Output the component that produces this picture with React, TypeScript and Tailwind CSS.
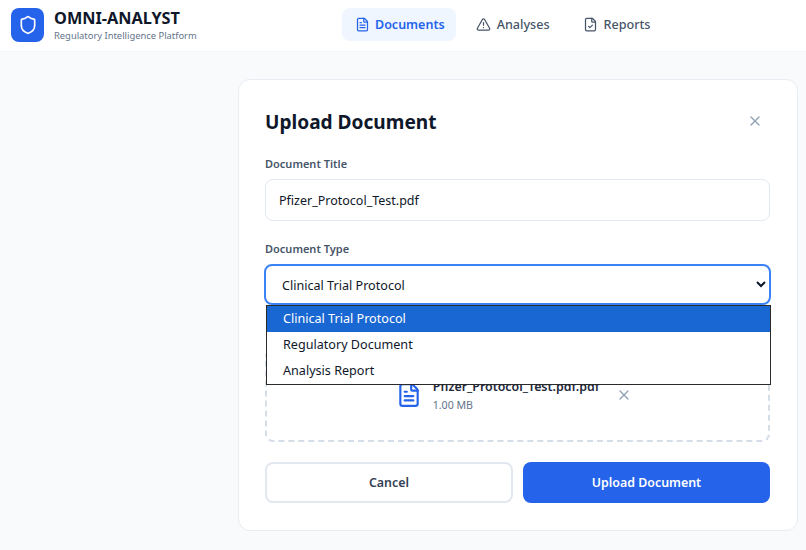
import { FileCheck, FileText, Shield, TriangleAlert, X } from 'lucide-react';

const font = { fontFamily: '"Noto Sans", "Open Sans", sans-serif' };

const App = () => {
  return (
    <div className="h-[550px] overflow-hidden bg-[#f8fafc]" style={font}>
      <header className="flex h-[52px] items-start border-b border-[#f1f5f9] bg-white">
        <div className="flex w-[342px] items-center gap-[10px] pl-[11px] pt-[7px]">
          <div className="flex h-[34px] w-[33px] items-center justify-center rounded-lg bg-[#2563eb]">
            <Shield size={20} strokeWidth={2} className="text-white" />
          </div>
          <div>
            <div className="text-[16.3px] leading-[22px] font-bold text-[#0f172a]">OMNI-ANALYST</div>
            <div className="text-[9.4px] leading-[14px] text-[#64748b]">Regulatory Intelligence Platform</div>
          </div>
        </div>
        <nav className="flex gap-[7px] pt-2">
          <a className="flex h-[33px] items-center gap-[5px] rounded-lg bg-[#eff6ff] pl-[13px] pr-[11px] text-[12.5px] font-semibold text-[#2563eb]">
            <FileText size={15} />
            <span className="pt-px">Documents</span>
          </a>
          <a className="flex h-[33px] items-center gap-[6px] rounded-lg px-[13px] text-[12.6px] font-medium text-[#475569]">
            <TriangleAlert size={15} />
            <span className="pt-px">Analyses</span>
          </a>
          <a className="flex h-[33px] items-center gap-[6px] rounded-lg px-[13px] text-[12.6px] font-medium text-[#475569]">
            <FileCheck size={15} />
            <span className="pt-px">Reports</span>
          </a>
        </nav>
      </header>

      <main className="flex justify-end pr-2 pt-[27px]">
        <div className="h-[452px] w-[560px] rounded-xl border border-[#e8edf3] bg-white pl-[26px] pr-[27px] pt-[26px]">
          <div className="flex h-[32px] items-center justify-between">
            <h2 className="text-[19.1px] font-bold text-[#0f172a]">Upload Document</h2>
            <X size={16} className="mb-[3px] mr-[7px] text-[#94a3b8]" />
          </div>

          <label className="mt-[18px] block text-[11px] leading-[16px] font-semibold text-[#475569]">Document Title</label>
          <input
            readOnly
            value="Pfizer_Protocol_Test.pdf"
            className="mt-[7px] block h-[42px] w-full rounded-lg border border-[#e2e8f0] px-[13px] text-[12.5px] text-[#0f172a] outline-none"
          />

          <label className="mt-[20px] block text-[11px] leading-[16px] font-semibold text-[#475569]">Document Type</label>
          <div className="relative mt-[7px]">
            <select
              defaultValue="Clinical Trial Protocol"
              className="-mx-px block h-[41px] w-[calc(100%+2px)] rounded-lg border-2 border-[#3b82f6] bg-white px-[12px] pt-px text-[12.6px] text-[#0f172a] outline-none"
            >
              <option>Clinical Trial Protocol</option>
              <option>Regulatory Document</option>
              <option>Analysis Report</option>
            </select>

            <div className="relative mt-[44px] flex h-[93px] items-center justify-center gap-[11px] rounded-lg border-2 border-dashed border-[#d5dde7] pr-[7px]">
              <FileText size={26} className="mb-px text-[#2563eb]" />
              <div>
                <div className="text-[12.4px] leading-[18px] font-semibold text-[#1e293b]">Pfizer_Protocol_Test.pdf.pdf</div>
                <div className="text-[10.6px] leading-[18px] text-[#64748b]">1.00 MB</div>
              </div>
              <X size={16} className="mb-px ml-[6px] text-[#94a3b8]" />
            </div>

            {/* open native select list, sits over the drop zone */}
            <div className="absolute left-[1px] right-[-1px] top-[41px] h-[80px] border-[1.5px] border-[#2a2a2a] bg-white text-[12.6px] text-[#0f172a]">
              <div className="flex h-[26px] items-center bg-[#1967d2] pl-[16px] text-white">Clinical Trial Protocol</div>
              <div className="flex h-[26px] items-center pl-[16px]">Regulatory Document</div>
              <div className="flex h-[26px] items-center pl-[16px]">Analysis Report</div>
            </div>
          </div>

          <div className="mt-[20px] flex gap-[10px]">
            <button className="h-[41px] w-[248px] shrink-0 rounded-lg border-2 border-[#e2e8f0] bg-white pt-px text-[12.4px] font-semibold text-[#334155]">Cancel</button>
            <button className="h-[41px] w-[247px] shrink-0 rounded-lg bg-[#2563eb] pt-px text-[12.4px] font-semibold text-white">Upload Document</button>
          </div>
        </div>
      </main>
    </div>
  );
};

export default App;
